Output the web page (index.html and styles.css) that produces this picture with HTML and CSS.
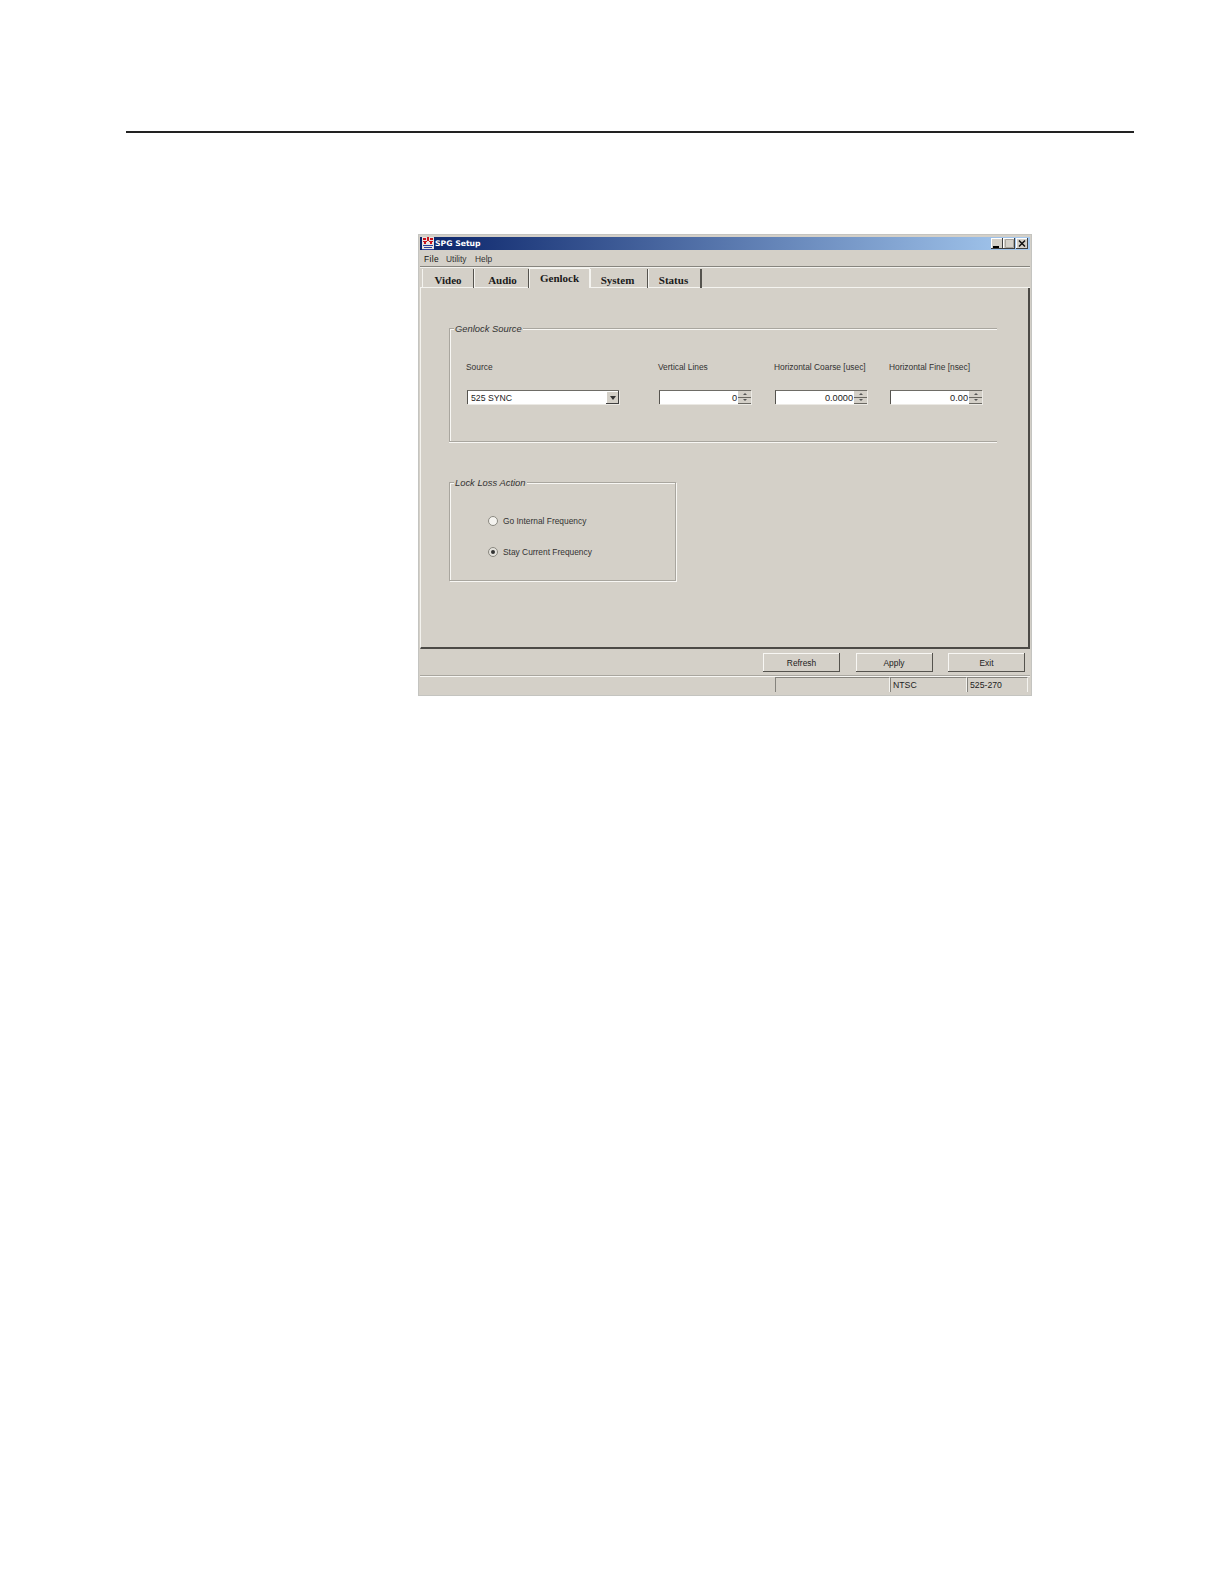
FILE: index.html
```html
<!DOCTYPE html>
<html lang="en">

<head>
    <meta charset="UTF-8">
    <title>SPG Setup</title>
    <link rel="stylesheet" href="styles.css">
</head>

<body>
    <div class="page-rule"></div>

    <div class="window">
        <!-- Title bar -->
        <div class="title-bar">
            <svg class="app-icon" width="12" height="13" viewBox="0 0 12 13">
                <rect width="12" height="13" fill="#e8e4e0" />
                <path d="M1 1h3v2H1zM5 0h2v4H5zM8 1h3v2H8zM1 4h4v1H1zM7 4h4v1H7zM2 5h2v2H2zM8 5h2v2H8z" fill="#c8141c" />
                <path d="M1 8h10v1H1zM2 10h8v1H2zM0 12h12v1H0z" fill="#2a3f9a" />
            </svg>
            <span class="title-text">SPG Setup</span>
            <div class="win-buttons">
                <div class="win-btn">
                    <svg width="12" height="11" viewBox="0 0 12 11"><path d="M2 8h6v2H2z" fill="#000" /></svg>
                </div>
                <div class="win-btn">
                    <svg width="12" height="11" viewBox="0 0 12 11"><path d="M2.5 1.5h8v8h-8z" fill="none" stroke="#a8a49c" /></svg>
                </div>
                <div class="win-btn close">
                    <svg width="12" height="11" viewBox="0 0 12 11"><path d="M3 2.5l6 6M9 2.5l-6 6" stroke="#111" stroke-width="1.5" /></svg>
                </div>
            </div>
        </div>

        <!-- Menu -->
        <div class="menu-bar">
            <span class="menu-file">File</span>
            <span class="menu-utility">Utility</span>
            <span>Help</span>
        </div>

        <!-- Tabs -->
        <div class="tabs">
            <div class="tab tab-video">Video</div>
            <div class="tab tab-audio">Audio</div>
            <div class="tab tab-genlock active">Genlock</div>
            <div class="tab tab-system">System</div>
            <div class="tab tab-status">Status</div>
        </div>

        <div class="panel">
            <!-- Genlock Source -->
            <div class="group genlock-group">
                <span class="group-title">Genlock Source</span>
                <div class="fields">
                    <div class="field field-source">
                        <label>Source</label>
                        <div class="select">
                            <span>525 SYNC</span>
                            <div class="select-arrow"><i></i></div>
                        </div>
                    </div>
                    <div class="field field-vertical">
                        <label>Vertical Lines</label>
                        <div class="spinner">
                            <span>0</span>
                            <div class="spin-btns"><div class="spin up"><i></i></div><div class="spin down"><i></i></div></div>
                        </div>
                    </div>
                    <div class="field field-coarse">
                        <label>Horizontal Coarse [usec]</label>
                        <div class="spinner">
                            <span>0.0000</span>
                            <div class="spin-btns"><div class="spin up"><i></i></div><div class="spin down"><i></i></div></div>
                        </div>
                    </div>
                    <div class="field field-fine">
                        <label>Horizontal Fine [nsec]</label>
                        <div class="spinner">
                            <span>0.00</span>
                            <div class="spin-btns"><div class="spin up"><i></i></div><div class="spin down"><i></i></div></div>
                        </div>
                    </div>
                </div>
            </div>

            <!-- Lock Loss Action -->
            <div class="group lock-group">
                <span class="group-title">Lock Loss Action</span>
                <div class="radio-row"><div class="radio"></div><span>Go Internal Frequency</span></div>
                <div class="radio-row"><div class="radio checked"></div><span>Stay Current Frequency</span></div>
            </div>
        </div>

        <!-- Buttons -->
        <div class="button-row">
            <button>Refresh</button>
            <button>Apply</button>
            <button>Exit</button>
        </div>

        <!-- Status bar -->
        <div class="status-bar">
            <div class="cell cell-empty"></div>
            <div class="cell cell-ntsc">NTSC</div>
            <div class="cell cell-format">525-270</div>
        </div>
    </div>
</body>

</html>
```

FILE: styles.css
```css
/* General Styles */
body {
    font-family: "Liberation Sans", Arial, sans-serif;
    margin: 0;
    padding: 0;
    background-color: #fff;
    color: #222;
    font-size: 8.4px;
}

.page-rule {
    height: 2px;
    margin: 131px 0 0 126px;
    width: 1008px;
    background-color: #222;
}

.window {
    box-sizing: border-box;
    width: 614px;
    height: 462px;
    margin: 101px 0 0 418px;
    padding: 2px 1px 1px 1px;
    background-color: #d4d0c8;
    border: 1px solid #c4c4c0;
    display: flex;
    flex-direction: column;
}

/* Title bar */
.title-bar {
    height: 13px;
    flex: none;
    display: flex;
    align-items: center;
    background: linear-gradient(to right, #0a246a, #a6caf0);
    color: #fff;
    padding-left: 2px;
}

.app-icon {
    flex: none;
}

.title-text {
    margin-left: 1px;
    font-weight: bold;
    font-family: "DejaVu Sans", sans-serif;
    font-size: 7.7px;
}

.win-buttons {
    margin-left: auto;
    margin-right: 2px;
    display: flex;
    gap: 0;
}

.win-btn {
    box-sizing: border-box;
    width: 12px;
    height: 11px;
    background-color: #d4d0c8;
    box-shadow: inset -1px -1px #404040, inset 1px 1px #fff;
}

.win-btn svg {
    display: block;
}

.win-btn.close {
    margin-left: 1px;
}

/* Menu */
.menu-bar {
    height: 17px;
    flex: none;
    display: flex;
    align-items: center;
    padding: 1px 0 0 4px;
    box-sizing: border-box;
    border-bottom: 1px solid #86847e;
    color: #333;
}

.menu-file {
    width: 22px;
    color: #111;
    letter-spacing: 0.4px;
}

.menu-utility {
    width: 29px;
}

/* Tabs */
.tabs {
    height: 21px;
    flex: none;
    display: flex;
    padding-left: 2px;
    box-sizing: border-box;
    border-top: 1px solid #f4f3ef;
    border-bottom: 1px solid #f4f3ef;
    font-family: "Liberation Serif", "Times New Roman", serif;
    font-weight: bold;
    font-size: 11px;
    color: #1a1a1a;
}

.tab {
    box-sizing: border-box;
    height: 19px;
    margin-top: 1px;
    padding-top: 2px;
    display: flex;
    align-items: center;
    justify-content: center;
    border-right: 1px solid #55534e;
    border-left: 1px solid #f4f3ef;
}

.tab-video { width: 52px; }
.tab-audio { width: 55px; padding-left: 2px; }
.tab-system { width: 58px; padding-right: 3px; }
.tab-status { width: 54px; padding-right: 2px; border-right-width: 2px; }

.tab.active {
    width: 61px;
    height: 20px;
    margin-top: 0;
    padding: 0 0 1px;
    background-color: #d4d0c8;
    border-top: 1px solid #f4f3ef;
    border-right: 1px solid #f4f3ef;
}

/* Main panel */
.panel {
    flex: none;
    height: 361px;
    box-sizing: border-box;
    border-right: 2px solid #4c4a46;
    border-bottom: 2px solid #4c4a46;
    border-left: 1px solid #f4f3ef;
    padding: 40px 0 0 28px;
}

.group {
    box-sizing: border-box;
    position: relative;
    border: 1px solid #a9a69f;
    box-shadow: inset 1px 1px #f8f7f4, 1px 1px #f8f7f4;
}

.group-title {
    position: absolute;
    top: -6px;
    left: 4px;
    padding: 0 1px;
    background-color: #d4d0c8;
    font-style: italic;
    font-size: 9.4px;
    line-height: 11px;
    color: #333;
}

.genlock-group {
    width: 548px;
    height: 114px;
    border-right: none;
    box-shadow: inset 1px 1px #f8f7f4, 0 1px #f8f7f4;
    padding: 33px 0 0 17px;
}

.fields {
    display: flex;
}

.field label {
    display: block;
    height: 10px;
    line-height: 10px;
    margin: 0 0 18px -1px;
    white-space: nowrap;
    color: #333;
}

.field-source { width: 192px; }
.field-vertical { width: 116px; }
.field-coarse { width: 115px; }
.field-fine { width: 92px; }

.select,
.spinner {
    box-sizing: border-box;
    height: 14px;
    display: flex;
    align-items: center;
    background-color: #fff;
    border-top: 1px solid #6e6c66;
    border-left: 1px solid #55534e;
    box-shadow: 1px 1px #ebe9e4;
    line-height: 12px;
}

.select {
    width: 152px;
    padding-left: 3px;
    font-size: 8.7px;
}

.select-arrow {
    margin-left: auto;
    box-sizing: border-box;
    width: 13px;
    height: 13px;
    background-color: #d4d0c8;
    box-shadow: inset -1px -1px #404040, inset 1px 1px #fff;
    display: flex;
    align-items: center;
    justify-content: center;
}

.select-arrow i {
    border-top: 4px solid #333;
    border-left: 3px solid transparent;
    border-right: 3px solid transparent;
}

.spinner {
    width: 92px;
    justify-content: flex-end;
    font-size: 9.2px;
}

.spin-btns {
    flex: none;
    width: 13px;
    height: 13px;
    margin-left: 1px;
    display: flex;
    flex-direction: column;
}

.spin {
    flex: 1;
    box-sizing: border-box;
    background-color: #d4d0c8;
    border-bottom: 1px solid #6a6862;
    display: flex;
    align-items: center;
    justify-content: center;
}

.spin i {
    display: block;
    width: 0;
}

.spin.up i {
    border-bottom: 2px solid #555;
    border-left: 2px solid transparent;
    border-right: 2px solid transparent;
}

.spin.down i {
    border-top: 2px solid #555;
    border-left: 2px solid transparent;
    border-right: 2px solid transparent;
}

.lock-group {
    width: 227px;
    height: 99px;
    margin-top: 40px;
    padding: 32px 0 0 38px;
}

.radio-row {
    display: flex;
    align-items: center;
    height: 11px;
    margin-bottom: 20px;
    color: #333;
}

.radio {
    box-sizing: border-box;
    width: 10px;
    height: 10px;
    border-radius: 50%;
    margin-right: 5px;
    background-color: #f4f3ef;
    border: 1px solid #8a8880;
    display: flex;
    align-items: center;
    justify-content: center;
}

.radio.checked {
    background-color: #e4e2dc;
}

.radio.checked::before {
    content: "";
    width: 4px;
    height: 4px;
    border-radius: 50%;
    background-color: #333;
}

/* Buttons */
.button-row {
    flex: none;
    height: 27px;
    box-sizing: border-box;
    display: flex;
    justify-content: flex-end;
    gap: 15.5px;
    padding: 4px 5px 0 0;
    border-bottom: 1px solid #a9a69f;
}

button {
    width: 77px;
    height: 19px;
    padding: 0;
    border: none;
    background-color: #d4d0c8;
    box-shadow: inset -1px -1px #55534e, inset 1px 1px #f8f7f4;
    font-family: "Liberation Sans", Arial, sans-serif;
    font-size: 8.4px;
    color: #222;
}

/* Status bar */
.status-bar {
    flex: none;
    height: 17px;
    box-sizing: border-box;
    border-top: 1px solid #f8f7f4;
    display: flex;
    justify-content: flex-end;
    padding-right: 2px;
}

.cell {
    box-sizing: border-box;
    height: 15px;
    border-top: 1px solid #85837d;
    border-left: 1px solid #85837d;
    border-right: 1px solid #f4f3ef;
    padding-left: 2px;
    line-height: 14px;
    font-size: 8.7px;
}

.cell-empty { width: 115px; }
.cell-ntsc { width: 77px; }
.cell-format { width: 61px; }
```
